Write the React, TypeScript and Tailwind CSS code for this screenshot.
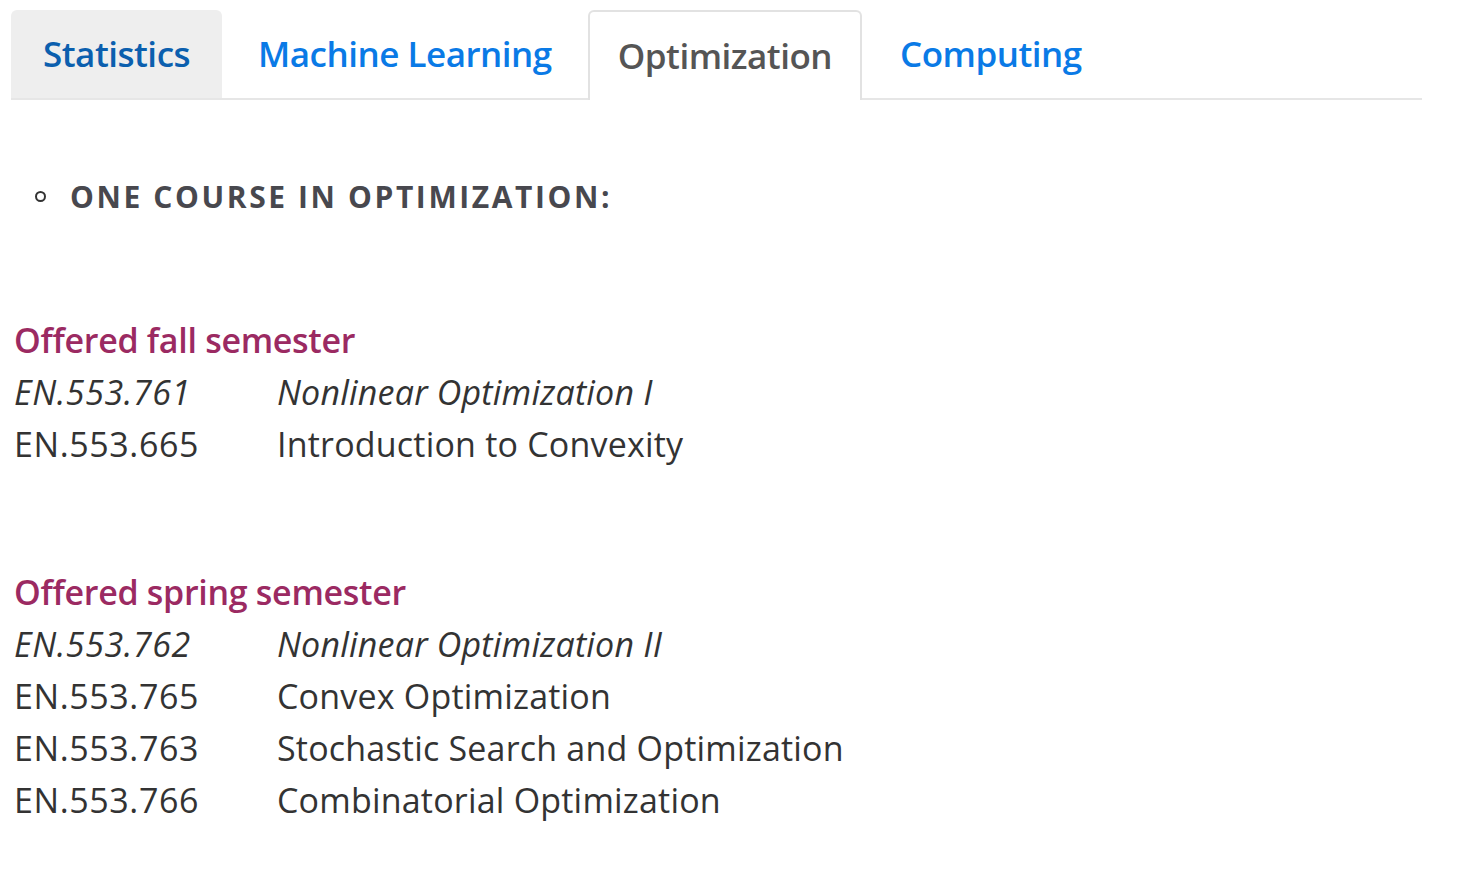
import React from 'react';

const tabs = [
  { label: 'Statistics', state: 'hover', pad: 'px-[32px]' },
  { label: 'Machine Learning', state: 'idle', pad: 'px-[36px]' },
  { label: 'Optimization', state: 'active', pad: 'px-[28px]' },
  { label: 'Computing', state: 'idle', pad: 'px-[38px]' },
];

const fall = [
  { code: 'EN.553.761', title: 'Nonlinear Optimization I', italic: true },
  { code: 'EN.553.665', title: 'Introduction to Convexity', italic: false },
];

const spring = [
  { code: 'EN.553.762', title: 'Nonlinear Optimization II', italic: true },
  { code: 'EN.553.765', title: 'Convex Optimization', italic: false },
  { code: 'EN.553.763', title: 'Stochastic Search and Optimization', italic: false },
  { code: 'EN.553.766', title: 'Combinatorial Optimization', italic: false },
];

type Course = { code: string; title: string; italic: boolean };

const Section: React.FC<{ heading: string; courses: Course[]; className?: string }> = ({ heading, courses, className }) => (
  <div className={className}>
    <h3 className="text-[34px] leading-[52px] font-semibold text-[#9b2a62] tracking-[-0.3px]">{heading}</h3>
    {courses.map(c => (
      <div key={c.code} className={`flex text-[34px] leading-[52px] text-[#333] tracking-[0.2px] ${c.italic ? 'italic' : ''}`}>
        <span className="w-[263px] shrink-0 tracking-[0.6px]">{c.code}</span>
        <span>{c.title}</span>
      </div>
    ))}
  </div>
);

export default function App() {
  return (
    <div className="min-h-[878px] bg-white pt-[10px] font-['Open_Sans',sans-serif]">
      {/* Tab bar */}
      <div className="ml-[11px] w-[1411px] flex border-b-2 border-[#e6e6e6]">
        {tabs.map(t => (
          <div
            key={t.label}
            className={
              `h-[88px] ${t.pad} flex items-center rounded-t-[6px] text-[35px] font-semibold tracking-[-0.5px] ` +
              (t.state === 'hover'
                ? 'bg-[#eeeeee] text-[#0b5fae]'
                : t.state === 'active'
                ? 'bg-white text-[#555] border-2 border-b-0 border-[#e2e2e2] -mb-[2px] h-[90px]'
                : 'text-[#0a7ae6]')
            }
          >
            {t.label}
          </div>
        ))}
      </div>

      <div className="pl-[14px]">
        <div className="mt-[76px] flex items-center h-[40px]">
          <span className="ml-[21px] w-[11px] h-[11px] rounded-full border-[2.5px] border-[#333]" />
          <span className="ml-[24px] text-[30px] font-bold tracking-[2.6px] text-[#48484e]">ONE COURSE IN OPTIMIZATION:</span>
        </div>

        <Section heading="Offered fall semester" courses={fall} className="mt-[98px]" />
        <Section heading="Offered spring semester" courses={spring} className="mt-[96px]" />
      </div>
    </div>
  );
}
